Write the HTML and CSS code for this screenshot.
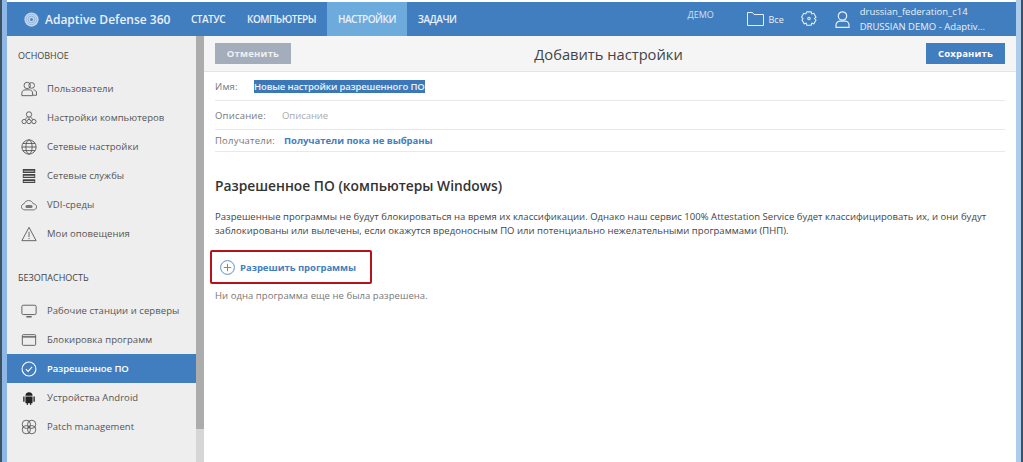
FILE: index.html
```html
<!DOCTYPE html>
<html lang="ru">
<head>
    <meta charset="UTF-8">
    <title>Adaptive Defense 360</title>
    <link rel="stylesheet" href="styles.css">
</head>
<body>
    <div class="window">
        <header class="topbar">
            <div class="brand">
                <svg class="brand-icon" viewBox="0 0 20 20"><circle cx="10" cy="10" r="9.5" fill="#c4d6ea"/><circle cx="10" cy="10" r="7" fill="none" stroke="#8fb0d6"/><circle cx="10" cy="10" r="4.5" fill="none" stroke="#7fa4d0"/><circle cx="10" cy="10" r="2" fill="#4c82c0"/></svg>
                <span>Adaptive Defense 360</span>
            </div>
            <nav class="topnav">
                <a>СТАТУС</a>
                <a>КОМПЬЮТЕРЫ</a>
                <a class="current">НАСТРОЙКИ</a>
                <a>ЗАДАЧИ</a>
            </nav>
            <div class="demo">ДЕМО</div>
            <div class="folder">
                <svg width="17" height="14" viewBox="0 0 17 14" fill="none" stroke="#e4edf7"><path d="M.5 13.5v-13h5l1.5 2h9.5v11z"/></svg>
                <span>Все</span>
            </div>
            <svg class="gear" width="16" height="16" viewBox="0 0 18 18" fill="none" stroke="#e4edf7" stroke-width="1.2"><path d="M6.500 1h5l.6 2.300 2.300-.7 2.500 4.300-1.700 1.600 1.700 1.600-2.500 4.300-2.300-.7-.6 2.300h-5l-.6-2.300-2.300.7-2.500-4.300L2.300 8.500.6 6.900l2.500-4.300 2.300.7z"/><circle cx="9" cy="8.500" r="1.400"/></svg>
            <svg class="person" width="15" height="17" viewBox="0 0 15 17" fill="none" stroke="#e4edf7" stroke-width="1.2"><circle cx="7.5" cy="5" r="4.2"/><path d="M1 16.4v-2.2c0-2.4 2-4 4-4h5c2 0 4 1.6 4 4v2.2z"/></svg>
            <div class="account">
                <div>drussian_federation_c14</div>
                <div>DRUSSIAN DEMO - Adaptiv...</div>
            </div>
        </header>

        <div class="workspace">
            <aside class="sidebar">
                <div class="side-title first">ОСНОВНОЕ</div>
                <a class="side-item">
                    <svg class="side-icon" viewBox="0 0 18 18" fill="none" stroke="#555"><circle cx="7" cy="5" r="3.6"/><circle cx="12" cy="5" r="3.2"/><path d="M1 16.5v-3c0-2 1.6-3.5 3.5-3.5h5c2 0 3.5 1.500 3.500 3.500v3z"/><path d="M14 10c2 .2 3.500 1.500 3.500 3.500v2.500h-4"/></svg>
                    Пользователи
                </a>
                <a class="side-item">
                    <svg class="side-icon" viewBox="0 0 18 18" fill="none" stroke="#555"><circle cx="9" cy="5" r="3"/><circle cx="3.500" cy="13" r="2.400"/><circle cx="9" cy="13" r="2.400"/><circle cx="14.500" cy="13" r="2.400"/><path d="M7 8l-2.500 3M11 8l2.500 3M9 8v2.500"/></svg>
                    Настройки компьютеров
                </a>
                <a class="side-item">
                    <svg class="side-icon" viewBox="0 0 18 18" fill="none" stroke="#555"><circle cx="9" cy="9" r="8"/><ellipse cx="9" cy="9" rx="3.500" ry="8"/><path d="M1 9h16M2 5h14M2 13h14"/></svg>
                    Сетевые настройки
                </a>
                <a class="side-item">
                    <svg class="side-icon" viewBox="0 0 18 18" fill="#444"><path d="M2 1h14v4.500H2zM2 6.800h14v4.500H2zM2 12.600h14V17H2z"/><path fill="#eee" d="M3 3h12v1H3zM3 8.800h12v1H3zM3 14.500h12v1H3z"/></svg>
                    Сетевые службы
                </a>
                <a class="side-item">
                    <svg class="side-icon" viewBox="0 0 18 18" fill="none" stroke="#555" stroke-width=".9"><path d="M4.500 14.500C2 14.500.5 12.800.5 11c0-1.800 1.300-3.200 3-3.400C4.200 5.300 6.300 4 8.500 4c2.500 0 4.500 1.500 5.200 3.600 2.200 0 3.800 1.600 3.800 3.500 0 1.900-1.500 3.400-3.500 3.400z"/><rect x="5" y="9" width="8" height="3.500" rx="1.700" fill="#777" stroke="none"/></svg>
                    VDI-среды
                </a>
                <a class="side-item">
                    <svg class="side-icon" viewBox="0 0 18 18" fill="none" stroke="#555"><path d="M9 1.500L17 16.500H1z"/><path d="M9 6.500v6M9 13.600v1.200"/></svg>
                    Мои оповещения
                </a>

                <div class="side-title">БЕЗОПАСНОСТЬ</div>
                <a class="side-item">
                    <svg class="side-icon" viewBox="0 0 18 18" fill="none" stroke="#555"><rect x="1" y="2.500" width="16" height="10.500" rx="1.500"/><path d="M6 15.500h6" stroke-width="1.500"/></svg>
                    Рабочие станции и серверы
                </a>
                <a class="side-item">
                    <svg class="side-icon" viewBox="0 0 18 18" fill="none" stroke="#555"><rect x="1.500" y="3" width="15" height="12" rx="1"/><path d="M1.500 5.500h15" stroke-width="1.500"/></svg>
                    Блокировка программ
                </a>
                <a class="side-item active">
                    <svg class="side-icon" viewBox="0 0 18 18" fill="none" stroke="#fff" stroke-width="1.200"><circle cx="9" cy="9" r="7.800"/><path d="M5.500 9.200l2.500 2.500 4.500-5"/></svg>
                    Разрешенное ПО
                </a>
                <a class="side-item">
                    <svg class="side-icon" viewBox="0 0 18 18" fill="#222"><path d="M5 6.500a4 4 0 0 1 8 0zM5 7.300h8v6.700a1 1 0 0 1-1 1h-.5v2h-1.200v-2H7.700v2H6.500v-2H6a1 1 0 0 1-1-1zM2.500 7.300h1.500v6H2.500zM14 7.300h1.500v6H14z"/></svg>
                    Устройства Android
                </a>
                <a class="side-item">
                    <svg class="side-icon" viewBox="0 0 18 18" fill="none" stroke="#555"><rect x="1.500" y="1.500" width="9" height="9" rx="4"/><rect x="7.500" y="1.500" width="9" height="9" rx="4"/><rect x="1.500" y="7.500" width="9" height="9" rx="4"/><rect x="7.500" y="7.500" width="9" height="9" rx="4"/></svg>
                    Patch management
                </a>
            </aside>
            <div class="side-scroll"><div class="side-thumb"></div></div>

            <main class="content">
                <div class="toolbar">
                    <button class="btn btn-cancel">Отменить</button>
                    <div class="page-title">Добавить настройки</div>
                    <button class="btn btn-save">Сохранить</button>
                </div>
                <div class="form">
                    <div class="form-row row-name">
                        <span class="label label-name">Имя:</span>
                        <span class="selected">Новые настройки разрешенного ПО</span>
                    </div>
                    <div class="form-row">
                        <span class="label label-desc">Описание:</span>
                        <span class="placeholder">Описание</span>
                    </div>
                    <div class="form-row row-short">
                        <span class="label label-recv">Получатели:</span>
                        <a class="link">Получатели пока не выбраны</a>
                    </div>
                    <h2>Разрешенное ПО (компьютеры Windows)</h2>
                    <p class="intro">Разрешенные программы не будут блокироваться на время их классификации. Однако наш сервис 100% Attestation Service будет классифицировать их, и они будут заблокированы или вылечены, если окажутся вредоносным ПО или потенциально нежелательными программами (ПНП).</p>
                    <div class="allow-box">
                        <svg width="15" height="15" viewBox="0 0 15 15" fill="none" stroke="#5b8fcb"><circle cx="7.500" cy="7.500" r="6.900"/><path d="M7.500 3.800v7.400M3.800 7.500h7.400"/></svg>
                        <a class="link">Разрешить программы</a>
                    </div>
                    <p class="empty">Ни одна программа еще не была разрешена.</p>
                </div>
            </main>
        </div>
    </div>
</body>
</html>
```

FILE: styles.css
```css
html, body {
    margin: 0;
    height: 100%;
    overflow: hidden;
}
body {
    font-family: "Open Sans", Arial, sans-serif;
    font-size: 9.5px;
    color: #555;
}
.window {
    box-sizing: border-box;
    height: 462px;
    display: flex;
    flex-direction: column;
    padding: 2px 5px 0;
    background-color: #fff;
    border-left: 2px solid #3f5063;
    border-right: 2px solid #3f5063;
    box-shadow: inset 5px 0 0 #8db8e6, inset -5px 0 0 #aecdec;
}

/* barra superior */
.topbar {
    height: 34px;
    flex: none;
    display: flex;
    align-items: center;
    background-color: #417ec0;
    color: #fff;
}
.brand {
    display: flex;
    align-items: center;
    gap: 6px;
    flex: none;
    width: 173px;
    padding-left: 17px;
    box-sizing: border-box;
    font-size: 12px;
    font-weight: 600;
    white-space: nowrap;
    color: #e8f0f8;
}
.brand-icon {
    width: 15px;
    height: 15px;
}
.topnav {
    display: flex;
    height: 100%;
}
.topnav a {
    display: flex;
    align-items: center;
    padding: 0 11px;
    font-size: 10px;
    font-weight: 600;
    letter-spacing: -0.5px;
    color: #e8f0f8;
}
.topnav a.current {
    background-color: #6eabdd;
}
.demo {
    margin-left: 220px;
    margin-top: -9px;
    width: 59px;
    flex: none;
    font-size: 9px;
    color: #cfe0f1;
}
.folder {
    display: flex;
    align-items: center;
    gap: 5px;
    flex: none;
    font-size: 9px;
    color: #e8f0f8;
}
.gear {
    margin-left: 17px;
    flex: none;
}
.person {
    margin-left: 18px;
    flex: none;
}
.account {
    margin-left: 10px;
    font-size: 9.5px;
    line-height: 15px;
    color: #e8f0f8;
    white-space: nowrap;
}

.workspace {
    flex: 1;
    display: flex;
    min-height: 0;
}

/* menu lateral */
.sidebar {
    width: 189px;
    flex: none;
    background-color: #eee;
}
.side-title {
    padding: 13px 0 0 11px;
    margin: 10px 0 6px;
    height: 19px;
    line-height: 14px;
    font-size: 9px;
    color: #444;
}
.side-title.first {
    margin: 0;
    height: 25px;
}
.side-item {
    display: flex;
    align-items: center;
    height: 29px;
    padding-left: 14px;
    gap: 10px;
    font-size: 9.5px;
    letter-spacing: 0.06px;
    color: #555;
}
.side-icon {
    width: 16px;
    height: 16px;
    flex: none;
}
.side-item.active {
    background-color: #417ec0;
    color: #fff;
    font-weight: 600;
    letter-spacing: -0.05px;
}
.side-scroll {
    width: 8px;
    flex: none;
    background-color: #d6d6d6;
}
.side-thumb {
    height: 393px;
    background-color: #acacac;
}

/* contenido */
.content {
    flex: 1;
    min-width: 0;
    background-color: #fff;
}
.toolbar {
    height: 36px;
    box-sizing: border-box;
    display: flex;
    align-items: center;
    justify-content: space-between;
    padding: 0 11px;
    background-color: #f5f5f5;
    border-bottom: 1px solid #e4e4e4;
}
.btn {
    height: 21px;
    border: none;
    padding: 0;
    font-family: inherit;
    font-size: 9.5px;
    font-weight: 700;
    letter-spacing: 0.2px;
    color: #fff;
}
.btn-cancel {
    width: 76px;
    background-color: #a4adbb;
    color: #eef0f3;
}
.btn-save {
    width: 79px;
    background-color: #417ec0;
}
.page-title {
    font-size: 14.7px;
    color: #444;
}
.form {
    padding: 0 11px;
}
.form-row {
    height: 28px;
    display: flex;
    align-items: center;
    border-bottom: 1px solid #e8e8e8;
}
.row-short {
    height: 21px;
}
.label {
    color: #777;
    letter-spacing: 0.2px;
}
.label-name {
    width: 39px;
}
.label-desc {
    width: 67px;
}
.label-recv {
    width: 69px;
}
.selected {
    background-color: #3c78b8;
    color: #eaf1f8;
    font-weight: 600;
    line-height: 13px;
    letter-spacing: -0.15px;
}
.placeholder {
    color: #aaa;
    letter-spacing: -0.05px;
}
.link {
    color: #417ec0;
    font-weight: 700;
    letter-spacing: -0.03px;
}
h2 {
    margin: 24px 0 0;
    font-size: 13.8px;
    line-height: 20px;
    font-weight: 600;
    color: #333;
}
.intro {
    margin: 14px 0 0;
    line-height: 14px;
    font-size: 9.5px;
    letter-spacing: 0.03px;
    color: #444;
    max-width: 790px;
}
.allow-box {
    box-sizing: border-box;
    width: 162px;
    height: 34px;
    margin: 12px 0 0 -5px;
    padding-left: 8px;
    display: flex;
    align-items: center;
    gap: 5px;
    border: 2px solid #b5121b;
    border-radius: 2px;
}
.empty {
    margin: 5px 0 0;
    color: #777;
    letter-spacing: 0.05px;
}
```
